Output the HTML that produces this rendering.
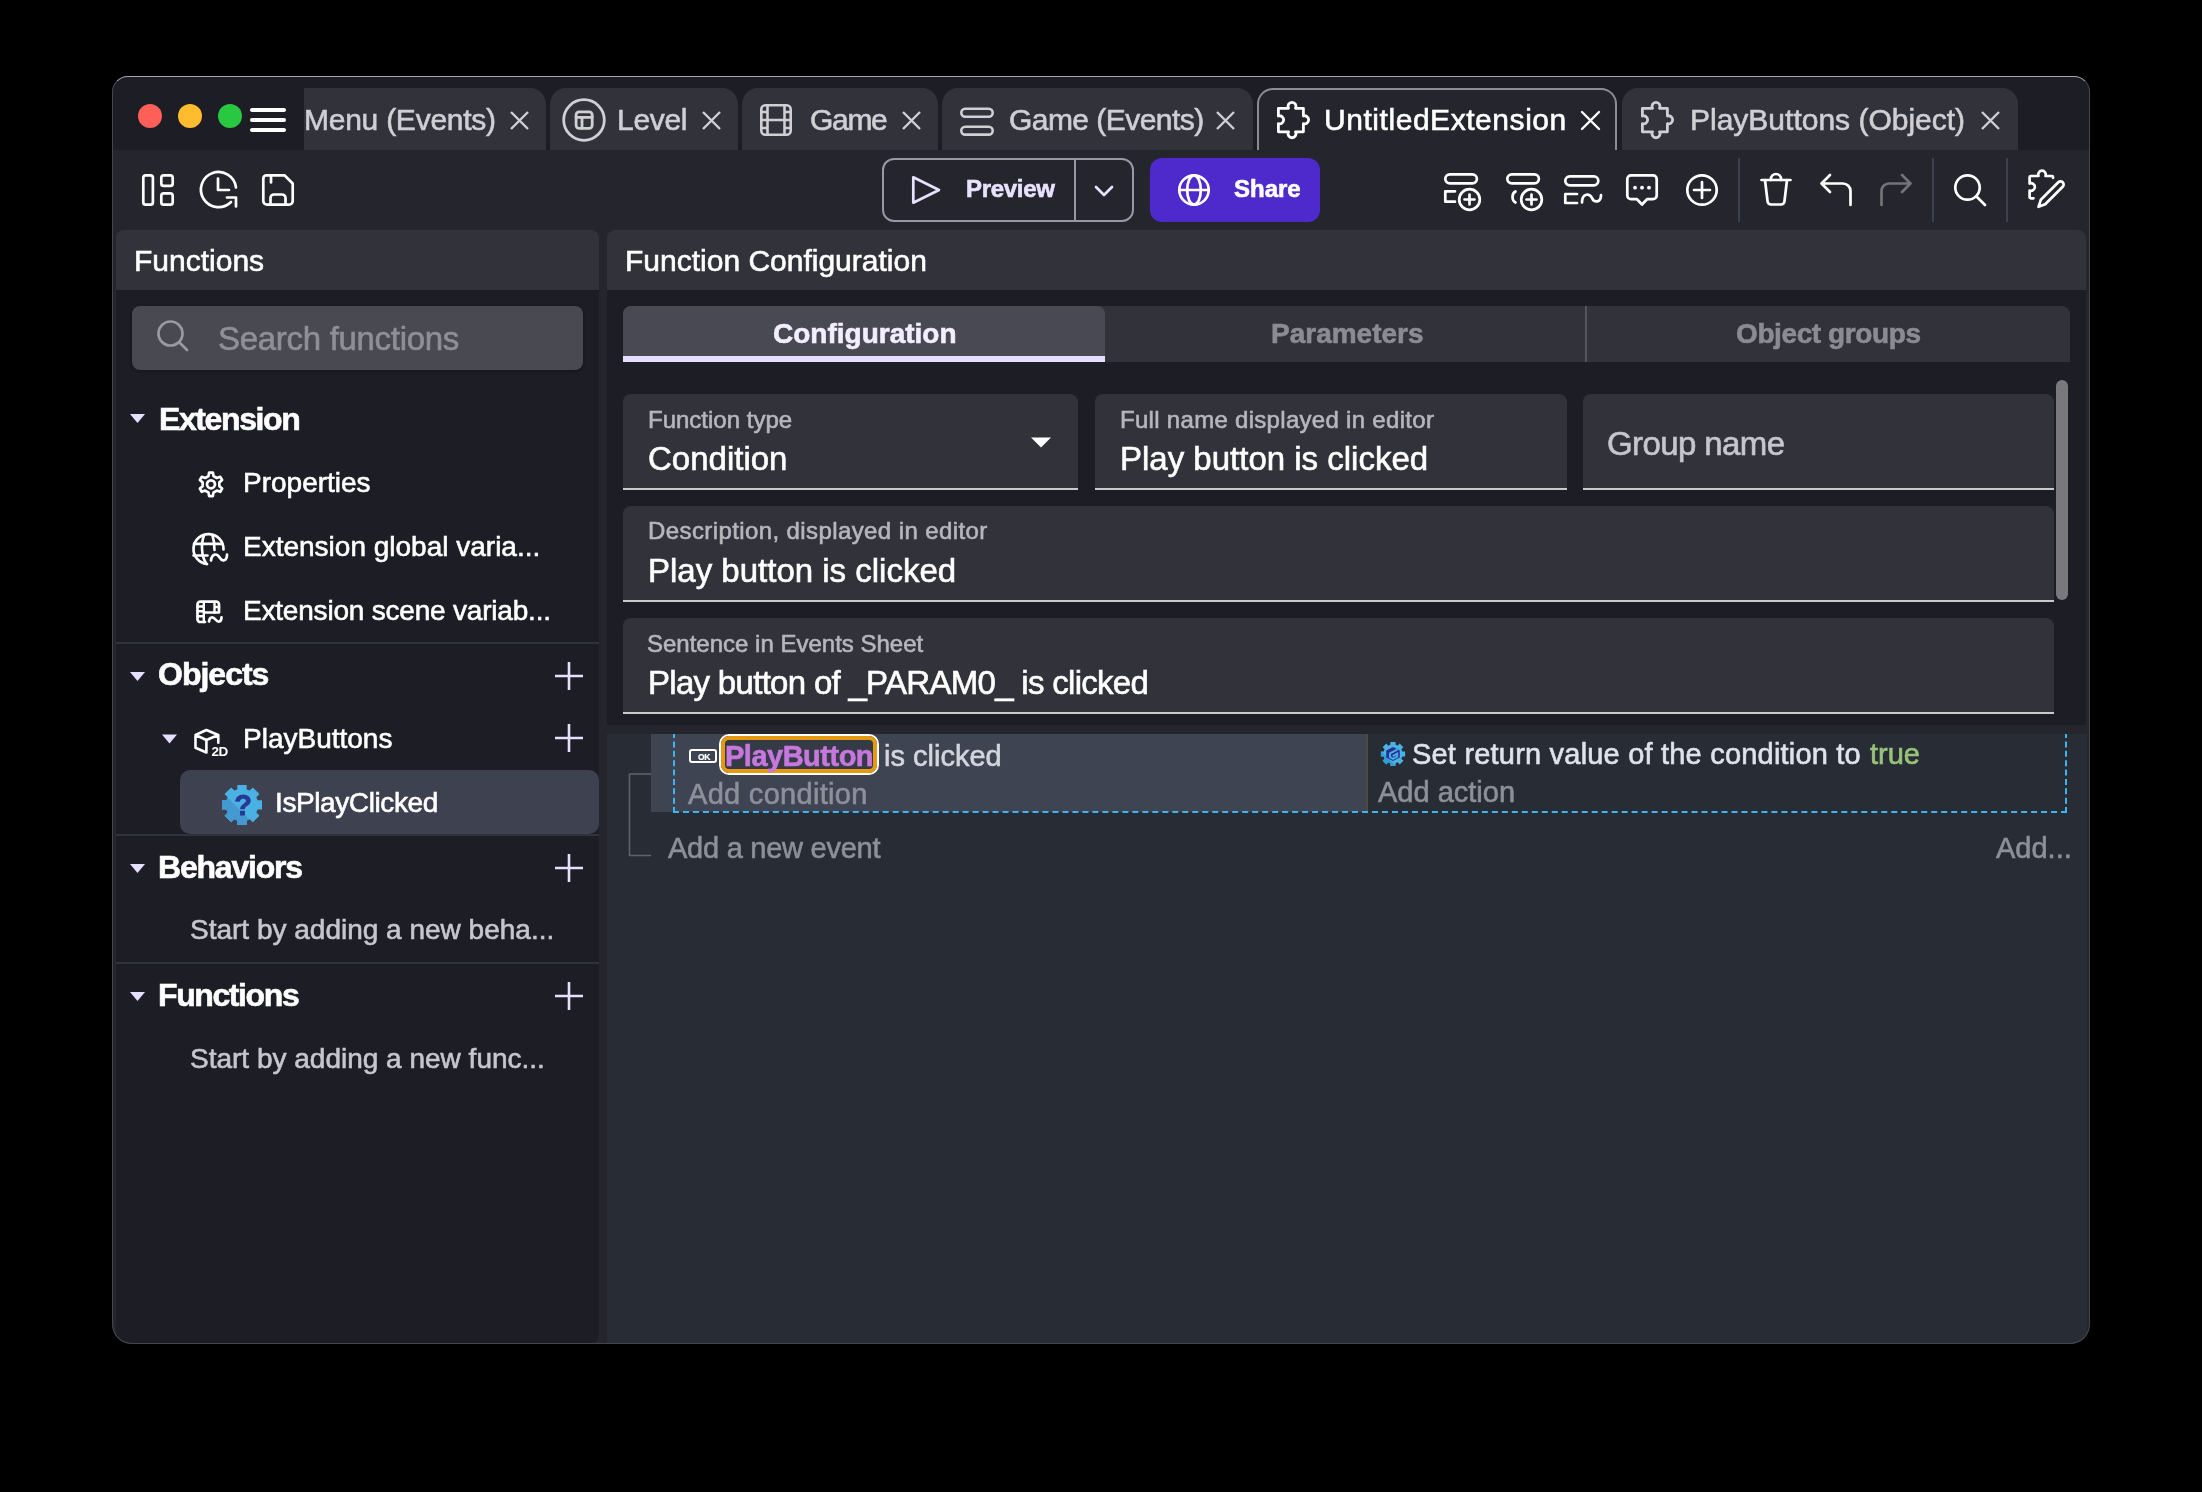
<!DOCTYPE html>
<html><head><meta charset="utf-8">
<style>
html,body{margin:0;padding:0;background:#000;width:2202px;height:1492px;overflow:hidden}
*{box-sizing:border-box}
body{font-family:"Liberation Sans",sans-serif;position:relative}
.a{position:absolute}
.t{position:absolute;line-height:1;white-space:nowrap;font-family:"Liberation Sans",sans-serif;-webkit-text-stroke:0.6px currentColor;will-change:transform}
svg{position:absolute;overflow:visible}
#win{left:112px;top:76px;width:1978px;height:1268px;border-radius:18px;background:#1d1d26;overflow:hidden}
#winborder{left:112px;top:76px;width:1978px;height:1268px;border-radius:16px 16px 20px 20px;border:1px solid #45454e;border-top-color:#a4a4aa;pointer-events:none}
.tab{position:absolute;top:88px;height:62px;background:#32323b;border-radius:16px 16px 0 0}
.tabtxt{color:#cfcfd4;font-size:30px}
.x{position:absolute}
.icon{fill:none;stroke:#fff;stroke-width:2;stroke-linecap:round;stroke-linejoin:round}
.hd{font-size:32px;font-weight:700;color:#fff}
.it{font-size:28px;color:#fff}
.sep{left:116px;width:483px;height:2px;background:#2f333e}
.tb{font-size:28px;font-weight:700;color:#8b8b91}
.fld{top:0;height:96px;background:#32323b;border-radius:8px 8px 0 0;border-bottom:2px solid #c9c9ce}
.lb{font-size:24px;color:#b6b6bc}
.vl{font-size:33px;color:#fff}
.ev{font-size:29px}
</style></head><body>
<div id="clip" style="position:absolute;left:0;top:0;width:2202px;height:1492px;clip-path:inset(76px 112px 148px 112px round 16px 16px 20px 20px)">
<div class="a" style="left:112px;top:76px;width:1978px;height:1268px;background:#1d1d26"></div>

<!-- titlebar content -->
<div class="a" style="left:138px;top:104px;width:24px;height:24px;border-radius:50%;background:#fe5f57"></div>
<div class="a" style="left:178px;top:104px;width:24px;height:24px;border-radius:50%;background:#febc2e"></div>
<div class="a" style="left:218px;top:104px;width:24px;height:24px;border-radius:50%;background:#28c840"></div>
<div class="a" style="left:250px;top:108px;width:36px;height:4px;border-radius:2px;background:#fff"></div>
<div class="a" style="left:250px;top:118px;width:36px;height:4px;border-radius:2px;background:#fff"></div>
<div class="a" style="left:250px;top:128px;width:36px;height:4px;border-radius:2px;background:#fff"></div>

<!-- tabs -->
<div class="tab" style="left:304px;width:242px;border-top-left-radius:0"></div>
<div class="t tabtxt" style="left:304px;top:105.3px;letter-spacing:-0.25px">Menu (Events)</div>

<div class="tab" style="left:550px;width:188px"></div>
<div class="t tabtxt" style="left:617px;top:105.3px;letter-spacing:-0.3px">Level</div>

<div class="tab" style="left:742px;width:196px"></div>
<div class="t tabtxt" style="left:810px;top:105.3px;letter-spacing:-1.3px">Game</div>

<div class="tab" style="left:942px;width:311px"></div>
<div class="t tabtxt" style="left:1009px;top:105.3px;letter-spacing:-0.55px">Game (Events)</div>

<div class="a" style="left:1257px;top:88px;width:360px;height:64px;background:#25252e;border:2px solid #8c8c92;border-bottom:none;border-radius:16px 16px 0 0"></div>
<div class="t tabtxt" style="left:1324px;top:105.3px;color:#fff;letter-spacing:0.55px">UntitledExtension</div>

<div class="tab" style="left:1622px;width:396px"></div>
<div class="t tabtxt" style="left:1690px;top:105.3px">PlayButtons (Object)</div>

<!-- toolbar -->
<div class="a" style="left:113px;top:150px;width:1976px;height:1193px;background:#25252e"></div>
<div class="a" style="left:882px;top:158px;width:252px;height:64px;border:2px solid #9b96a6;border-radius:12px"></div>
<div class="a" style="left:1074px;top:158px;width:2px;height:64px;background:#9b96a6"></div>
<div class="t" style="left:966px;top:177px;font-size:24px;font-weight:700;color:#e9e2ff;letter-spacing:-0.3px">Preview</div>
<div class="a" style="left:1150px;top:158px;width:170px;height:64px;background:#4e29cc;border-radius:12px"></div>
<div class="t" style="left:1234px;top:177px;font-size:24px;font-weight:700;color:#fff">Share</div>
<div class="a" style="left:1738px;top:158px;width:2px;height:64px;background:#3b414e"></div>
<div class="a" style="left:1932px;top:158px;width:2px;height:64px;background:#3b414e"></div>
<div class="a" style="left:2006px;top:158px;width:2px;height:64px;background:#3b414e"></div>

<!-- left panel -->
<div class="a" style="left:116px;top:230px;width:483px;height:60px;background:#32323b;border-radius:8px 8px 0 0"></div>
<div class="a" style="left:116px;top:290px;width:483px;height:1053px;background:#1d1d26;border-radius:0 0 8px 8px"></div>
<div class="t" style="left:134px;top:246px;font-size:30px;color:#fff">Functions</div>
<div class="a" style="left:132px;top:306px;width:451px;height:64px;background:#494952;border-radius:8px;box-shadow:0 1px 3px rgba(0,0,0,.35)"></div>
<div class="t" style="left:218px;top:321.5px;font-size:33px;color:#8f8f95;letter-spacing:-0.3px">Search functions</div>

<div class="t hd" style="left:159px;top:402.5px;letter-spacing:-1.4px">Extension</div>
<div class="t it" style="left:243px;top:469px">Properties</div>
<div class="t it" style="left:243px;top:532.5px">Extension global varia...</div>
<div class="t it" style="left:243px;top:596.5px;letter-spacing:-0.2px">Extension scene variab...</div>
<div class="a sep" style="top:642px"></div>
<div class="t hd" style="left:158px;top:658px;letter-spacing:-1px">Objects</div>
<div class="t it" style="left:243px;top:725px">PlayButtons</div>
<div class="a" style="left:180px;top:770px;width:419px;height:64px;background:#3d4150;border-radius:10px"></div>
<div class="t it" style="left:275px;top:789px;letter-spacing:-0.4px">IsPlayClicked</div>
<div class="a sep" style="top:834px"></div>
<div class="t hd" style="left:158px;top:851px;letter-spacing:-1.2px">Behaviors</div>
<div class="t it" style="left:190px;top:916px;color:#c6c6cc">Start by adding a new beha...</div>
<div class="a sep" style="top:962px"></div>
<div class="t hd" style="left:158px;top:979px;letter-spacing:-1.4px">Functions</div>
<div class="t it" style="left:190px;top:1044.5px;color:#c6c6cc">Start by adding a new func...</div>

<!-- main panel -->
<div class="a" style="left:607px;top:230px;width:1479px;height:60px;background:#32323b;border-radius:8px 8px 0 0"></div>
<div class="a" style="left:607px;top:290px;width:1479px;height:435px;background:#1d1d26"></div>
<div class="a" style="left:607px;top:734px;width:1480px;height:609px;background:#282c34"></div>
<div class="t" style="left:625px;top:246px;font-size:30px;color:#fff">Function Configuration</div>

<div class="a" style="left:623px;top:306px;width:1447px;height:56px;background:#32323b;border-radius:8px 8px 0 0"></div>
<div class="a" style="left:623px;top:306px;width:482px;height:56px;background:#494953;border-radius:8px 8px 0 0"></div>
<div class="a" style="left:623px;top:356px;width:482px;height:6px;background:#e6dfff"></div>
<div class="a" style="left:1585px;top:306px;width:2px;height:56px;background:#55555d"></div>
<div class="t tb" style="left:773px;top:320px;color:#f2eeff">Configuration</div>
<div class="t tb" style="left:1271px;top:320px">Parameters</div>
<div class="t tb" style="left:1736px;top:320px;letter-spacing:-0.4px">Object groups</div>

<div class="a fld" style="left:623px;top:394px;width:455px"></div>
<div class="t lb" style="left:648px;top:408px">Function type</div>
<div class="t vl" style="left:648px;top:442px">Condition</div>
<div class="a fld" style="left:1095px;top:394px;width:472px"></div>
<div class="t lb" style="left:1120px;top:408px;letter-spacing:0.3px">Full name displayed in editor</div>
<div class="t vl" style="left:1120px;top:442px">Play button is clicked</div>
<div class="a fld" style="left:1583px;top:394px;width:471px"></div>
<div class="t vl" style="left:1607px;top:427px;color:#c6c6cc;letter-spacing:-0.6px">Group name</div>
<div class="a fld" style="left:623px;top:506px;width:1431px"></div>
<div class="t lb" style="left:648px;top:519px;letter-spacing:0.4px">Description, displayed in editor</div>
<div class="t vl" style="left:648px;top:554px">Play button is clicked</div>
<div class="a fld" style="left:623px;top:618px;width:1431px"></div>
<div class="t lb" style="left:647px;top:632px">Sentence in Events Sheet</div>
<div class="t vl" style="left:648px;top:666px;letter-spacing:-0.7px">Play button of _PARAM0_ is clicked</div>
<div class="a" style="left:2056px;top:380px;width:12px;height:220px;background:#78787d;border-radius:6px"></div>

<!-- events sheet -->
<div class="a" style="left:651px;top:734px;width:715px;height:78px;background:#3e4452"></div>
<div class="a" style="left:1366px;top:734px;width:2px;height:78px;background:#4d4a42"></div>
<div class="a" style="left:719px;top:734px;width:160px;height:41px;border:2px solid #fff;border-radius:10px"></div>
<div class="a" style="left:721px;top:736px;width:156px;height:37px;border:4px solid #e39a10;border-radius:8px;background:#353a47"></div>
<div class="t ev" style="left:725px;top:742px;font-weight:700;color:#c678dd;letter-spacing:-0.5px">PlayButton</div>
<div class="t ev" style="left:884px;top:742px;color:#d3d6dd">is clicked</div>
<div class="t ev" style="left:688px;top:779.5px;color:#8c909a;letter-spacing:0.3px">Add condition</div>
<div class="t ev" style="left:1412px;top:740px;color:#dee3ec;letter-spacing:0.2px">Set return value of the condition to</div>
<div class="t ev" style="left:1870px;top:740px;color:#98c379">true</div>
<div class="t ev" style="left:1378px;top:777.5px;color:#8c909a">Add action</div>
<div class="t ev" style="left:668px;top:834px;letter-spacing:-0.25px;color:#8c909a">Add a new event</div>
<div class="t ev" style="left:1996px;top:834px;color:#8c909a">Add...</div>
<div class="a" style="left:689px;top:749px;width:28px;height:14px;border:2px solid #fff;border-radius:3px"></div>
<div class="t" style="left:697.5px;top:752.5px;font-size:8.5px;font-weight:700;color:#fff;letter-spacing:-0.3px;-webkit-text-stroke:0.2px #fff">OK</div>
<svg class="a" style="left:0;top:0" width="2202" height="1492" viewBox="0 0 2202 1492">
<g fill="none" stroke-linecap="round" stroke-linejoin="round">
<!-- tab icons -->
<g stroke="#cfcfd4" stroke-width="2.6">
 <circle cx="584" cy="120" r="20.3" stroke-width="2.8"/>
 <rect x="576.1" y="111.8" width="16.1" height="16.5" rx="3" stroke-width="2.8"/>
 <path d="M576.1 117.3H592.2M582 117.3V128.3" stroke-width="2.8"/>
 <rect x="761.3" y="105.3" width="29.4" height="29.4" rx="4"/>
 <path d="M767.5 105.3V134.7M784.5 105.3V134.7M767.5 120H784.5M761.3 112H767.5M761.3 120H767.5M761.3 128H767.5M784.5 112H790.7M784.5 120H790.7M784.5 128H790.7"/>
 <rect x="961.3" y="108.8" width="31.4" height="7.9" rx="3.9"/>
 <rect x="961.3" y="126.7" width="31.4" height="7.9" rx="3.9"/>
</g>
<!-- close x -->
<g stroke="#cfcfd4" stroke-width="2.4" stroke-linecap="butt">
 <path d="M511 112L528 129M528 112L511 129"/>
 <path d="M703 112L720 129M720 112L703 129"/>
 <path d="M903 112L920 129M920 112L903 129"/>
 <path d="M1217 112L1234 129M1234 112L1217 129"/>
 <path d="M1982 112L1999 129M1999 112L1982 129"/>
</g>
<path stroke="#fff" stroke-width="2.4" d="M1582 112L1599 129M1599 112L1582 129"/>
<!-- puzzle tab icons -->
<path stroke="#fff" stroke-width="2.8" d="M1278.4 108.3H1288.5A4 4 0 1 1 1295.5 108.3H1303.4V116A4 4 0 1 1 1303.4 123.6V131.8H1295.5A4 4 0 1 1 1288.5 131.8H1278.4V123.6A4 4 0 1 0 1278.4 116Z"/>
<path stroke="#cfcfd4" stroke-width="2.8" transform="translate(364,0)" d="M1278.4 108.3H1288.5A4 4 0 1 1 1295.5 108.3H1303.4V116A4 4 0 1 1 1303.4 123.6V131.8H1295.5A4 4 0 1 1 1288.5 131.8H1278.4V123.6A4 4 0 1 0 1278.4 116Z"/>

<!-- toolbar left icons -->
<g stroke="#fff" stroke-width="2.7">
 <rect x="143.3" y="175.3" width="9.6" height="29.4" rx="2.5"/>
 <rect x="161.3" y="175.3" width="11.4" height="10.6" rx="2.5"/>
 <rect x="161.3" y="193.3" width="11.4" height="11.4" rx="2.5"/>
 <path d="M236 187.5A17.6 17.6 0 1 0 231 202"/>
 <path d="M227 197.5H236V206.5"/>
 <path d="M218 178.5V190H229"/>
 <path d="M266 175.3H284.5L292.7 183.5V201A3.7 3.7 0 0 1 289 204.7H267A3.7 3.7 0 0 1 263.3 201V179A3.7 3.7 0 0 1 266 175.3Z"/>
 <path d="M271 176V182.5"/>
 <path d="M270.5 204.5V198A3.5 3.5 0 0 1 274 194.5H282A3.5 3.5 0 0 1 285.5 198V204.5"/>
</g>
<!-- preview / share icons -->
<g stroke="#e9e2ff" stroke-width="2.7">
 <path d="M913.3 177.3L939 190L913.3 202.7Z"/>
 <path d="M1096 187L1104 195L1112 187"/>
</g>
<g stroke="#fff" stroke-width="2.7">
 <circle cx="1194" cy="190" r="14.7"/>
 <ellipse cx="1194" cy="190" rx="6.8" ry="14.7"/>
 <path d="M1180 190H1208"/>
</g>
<!-- toolbar right icons -->
<g stroke="#fff" stroke-width="2.7">
 <rect x="1445.3" y="174.3" width="31.6" height="9" rx="4.5"/>
 <path d="M1455 191.3H1445.3V201.7H1455"/>
 <circle cx="1469.5" cy="199.5" r="10.3"/>
 <path d="M1469.5 194.5V204.5M1464.5 199.5H1474.5"/>
 <rect x="1507.3" y="174.3" width="31.6" height="9" rx="4.5"/>
 <path d="M1515.5 191.5C1511.5 193.5 1511.5 200.5 1515.5 202.5"/>
 <circle cx="1531.5" cy="199.5" r="10.3"/>
 <path d="M1531.5 194.5V204.5M1526.5 199.5H1536.5"/>
 <rect x="1565.3" y="176.3" width="33" height="9" rx="4.5"/>
 <path d="M1577 194H1565.3V203H1577"/>
 <path d="M1582 202.5C1582 193 1590 193 1592 198C1594 203 1601 203 1601 195"/>
 <path d="M1631 175.3H1653A3.7 3.7 0 0 1 1656.7 179V195.5A3.7 3.7 0 0 1 1653 199.2H1647L1642 204.5L1637 199.2H1631A3.7 3.7 0 0 1 1627.3 195.5V179A3.7 3.7 0 0 1 1631 175.3Z"/>
 <circle cx="1702" cy="190" r="14.7"/>
 <path d="M1702 182V198M1694 190H1710"/>
 <path d="M1761.5 180H1790.5"/>
 <path d="M1771 180V179A5 5 0 0 1 1781 179V180"/>
 <path d="M1765 180L1767.5 201A3.5 3.5 0 0 0 1771 204.5H1781A3.5 3.5 0 0 0 1784.5 201L1787 180"/>
 <path d="M1830 175L1821.5 183.5L1830 192M1821.5 183.5H1843A7.5 7.5 0 0 1 1850.5 191V205"/>
 <circle cx="1967.5" cy="187.5" r="12.2"/>
 <path d="M1976.5 196.5L1985 205"/>
 <path d="M2033.5 198.3H2031A1.5 1.5 0 0 1 2029.6 196.8V190.5A3.8 3.8 0 1 0 2029.6 183.5V177.5A1.5 1.5 0 0 1 2031 176H2038.5A3.8 3.8 0 1 1 2045.5 176H2052A1 1 0 0 1 2053 177V177.8"/>
 <path d="M2038.5 206.8L2040.8 199.8L2058.3 182.3A3.1 3.1 0 0 1 2062.7 186.7L2045.2 204.2Z"/>
 <circle cx="1635" cy="187.7" r="1.9" fill="#fff" stroke="none"/><circle cx="1642" cy="187.7" r="1.9" fill="#fff" stroke="none"/><circle cx="1649" cy="187.7" r="1.9" fill="#fff" stroke="none"/>
</g>
<path stroke="#737378" stroke-width="2.7" d="M1902 175L1910.5 183.5L1902 192M1910.5 183.5H1889A7.5 7.5 0 0 0 1881.5 191V205"/>

<!-- left panel icons -->
<circle cx="170.5" cy="333.5" r="12" stroke="#9a9aa0" stroke-width="2.7"/>
<path d="M179.5 342.5L187 350" stroke="#9a9aa0" stroke-width="2.7"/>
<g fill="#e6dfff" stroke="none">
 <path d="M130 414H145L137.5 423Z"/>
 <path d="M130 672H145L137.5 681Z"/>
 <path d="M162 734.5H177L169.5 743.5Z"/>
 <path d="M130 864H145L137.5 873Z"/>
 <path d="M130 992H145L137.5 1001Z"/>
</g>
<g stroke="#e6dfff" stroke-width="2.6" stroke-linecap="butt">
 <path d="M569 662V690M555 676H583"/>
 <path d="M569 724V752M555 738H583"/>
 <path d="M569 854V882M555 868H583"/>
 <path d="M569 982V1010M555 996H583"/>
</g>
<g stroke="#fff" stroke-width="2.4">
 <path stroke-width="2.7" d="M208.49 476.08 L209.14 472.55 L212.86 472.55 L213.51 476.08 L216.87 478.01 L220.25 476.81 L222.11 480.04 L219.38 482.37 L219.38 486.23 L222.11 488.56 L220.25 491.79 L216.87 490.59 L213.51 492.52 L212.86 496.05 L209.14 496.05 L208.49 492.52 L205.13 490.59 L201.75 491.79 L199.89 488.56 L202.62 486.23 L202.62 482.37 L199.89 480.04 L201.75 476.81 L205.13 478.01Z"/>
 <circle cx="211" cy="484.3" r="4" stroke-width="2.8"/>
 <path stroke-width="2.7" d="M223.5 549.5A15 15 0 1 0 207 564"/>
 <path stroke-width="2.6" d="M194 543.9H222M193.5 555.5H207.5"/>
 <path stroke-width="2.6" d="M204 535.5C201 543 201 556 206.5 564M212.5 535.5C214 540 214.5 545 214.5 550"/>
 <path stroke-width="2.7" d="M211 560.5C212 553 217 553 220 558C222 561.5 227 561.5 227 554.5"/>
 <path stroke-width="2.7" d="M205 622H200.3A2.8 2.8 0 0 1 197.5 619.2V604.5A2.8 2.8 0 0 1 200.3 601.7H216.2A2.8 2.8 0 0 1 219 604.5V612.5H204"/>
 <path stroke-width="2.4" d="M203.8 602V622M214.5 602V612.5M197.5 606.5H203.8M197.5 611.3H203.8M197.5 616.2H203.8M214.5 607H219"/>
 <path stroke-width="2.7" d="M209 621.5C209.5 616.5 213 616.5 215.5 619.5C218 622.5 221.5 622.5 221.5 617.3"/>
</g>
<g stroke="#fff" stroke-width="2.6" fill="none">
 <path d="M206.4 730L218.3 735V742.8M206.4 730L195.5 735V747.8L206.4 752.5V740L218.3 735M195.5 735L206.4 740"/>
</g>
<text x="211.5" y="756" font-family="Liberation Sans" font-size="13.5" font-weight="700" fill="#fff" stroke="none" letter-spacing="-0.5">2D</text>
<!-- Q gear -->
<defs><clipPath id="qc"><path d="M200 770L290 860H200Z"/></clipPath><clipPath id="gc"><path d="M1360 730L1420 790H1360Z"/></clipPath></defs>
<g stroke="none">
 <path fill="#4bb0e3" d="M237.30 789.40L237.30 784.90L246.70 784.90L246.70 789.40A16.2 16.2 0 0 1 249.64 790.61L252.82 787.43L259.47 794.08L256.29 797.26A16.2 16.2 0 0 1 257.50 800.20L262.00 800.20L262.00 809.60L257.50 809.60A16.2 16.2 0 0 1 256.29 812.54L259.47 815.72L252.82 822.37L249.64 819.19A16.2 16.2 0 0 1 246.70 820.40L246.70 824.90L237.30 824.90L237.30 820.40A16.2 16.2 0 0 1 234.36 819.19L231.18 822.37L224.53 815.72L227.71 812.54A16.2 16.2 0 0 1 226.50 809.60L222.00 809.60L222.00 800.20L226.50 800.20A16.2 16.2 0 0 1 227.71 797.26L224.53 794.08L231.18 787.43L234.36 790.61A16.2 16.2 0 0 1 237.30 789.40Z"/>
 <path fill="#4599d1" clip-path="url(#qc)" d="M237.30 789.40L237.30 784.90L246.70 784.90L246.70 789.40A16.2 16.2 0 0 1 249.64 790.61L252.82 787.43L259.47 794.08L256.29 797.26A16.2 16.2 0 0 1 257.50 800.20L262.00 800.20L262.00 809.60L257.50 809.60A16.2 16.2 0 0 1 256.29 812.54L259.47 815.72L252.82 822.37L249.64 819.19A16.2 16.2 0 0 1 246.70 820.40L246.70 824.90L237.30 824.90L237.30 820.40A16.2 16.2 0 0 1 234.36 819.19L231.18 822.37L224.53 815.72L227.71 812.54A16.2 16.2 0 0 1 226.50 809.60L222.00 809.60L222.00 800.20L226.50 800.20A16.2 16.2 0 0 1 227.71 797.26L224.53 794.08L231.18 787.43L234.36 790.61A16.2 16.2 0 0 1 237.30 789.40Z"/>
 <text x="243" y="815.3" text-anchor="middle" font-family="Liberation Sans" font-size="29" font-weight="700" fill="#263890" stroke="#263890" stroke-width="0.8">?</text>
</g>
<path fill="#fff" stroke="none" d="M1031 437.5H1051L1041 447.5Z"/>
<!-- events sheet -->
<g stroke="#5c6370" stroke-width="1.6" stroke-linecap="butt">
 <path d="M651 774H629.5V855.5H651"/>
</g>
<g stroke="#3cb5f2" stroke-width="2" stroke-linecap="butt" stroke-dasharray="6 4">
 <path stroke-dasharray="6 3.37" d="M674 813V734"/>
 <path stroke-dasharray="6 3.37" d="M2066 813V734"/>
 <path stroke-dasharray="6 3.986" d="M673 812H2067"/>
</g>
<!-- G icon -->
<g stroke="none">
 <path fill="#4ab3e6" d="M1390.40 744.76L1390.40 741.90L1395.60 741.90L1395.60 744.76A9.6 9.6 0 0 1 1397.70 745.63L1399.72 743.61L1403.39 747.28L1401.37 749.30A9.6 9.6 0 0 1 1402.24 751.40L1405.10 751.40L1405.10 756.60L1402.24 756.60A9.6 9.6 0 0 1 1401.37 758.70L1403.39 760.72L1399.72 764.39L1397.70 762.37A9.6 9.6 0 0 1 1395.60 763.24L1395.60 766.10L1390.40 766.10L1390.40 763.24A9.6 9.6 0 0 1 1388.30 762.37L1386.28 764.39L1382.61 760.72L1384.63 758.70A9.6 9.6 0 0 1 1383.76 756.60L1380.90 756.60L1380.90 751.40L1383.76 751.40A9.6 9.6 0 0 1 1384.63 749.30L1382.61 747.28L1386.28 743.61L1388.30 745.63A9.6 9.6 0 0 1 1390.40 744.76Z"/>
 <path fill="#2f9fd6" clip-path="url(#gc)" d="M1390.40 744.76L1390.40 741.90L1395.60 741.90L1395.60 744.76A9.6 9.6 0 0 1 1397.70 745.63L1399.72 743.61L1403.39 747.28L1401.37 749.30A9.6 9.6 0 0 1 1402.24 751.40L1405.10 751.40L1405.10 756.60L1402.24 756.60A9.6 9.6 0 0 1 1401.37 758.70L1403.39 760.72L1399.72 764.39L1397.70 762.37A9.6 9.6 0 0 1 1395.60 763.24L1395.60 766.10L1390.40 766.10L1390.40 763.24A9.6 9.6 0 0 1 1388.30 762.37L1386.28 764.39L1382.61 760.72L1384.63 758.70A9.6 9.6 0 0 1 1383.76 756.60L1380.90 756.60L1380.90 751.40L1383.76 751.40A9.6 9.6 0 0 1 1384.63 749.30L1382.61 747.28L1386.28 743.61L1388.30 745.63A9.6 9.6 0 0 1 1390.40 744.76Z"/>
 <path fill="#2c2f92" d="M1393 747L1399.8 750.5V757.5L1393 761L1386.2 757.5V750.5Z"/>
 <path fill="none" stroke="#45ace0" stroke-width="2" stroke-linejoin="miter" d="M1396.8 749.8L1390 753.3V757.2L1393 758.8L1397.2 756.6V753.7L1393.5 755.6"/>
</g>
</g>
</svg>
</div>
<div id="winborder" class="a"></div>
</body></html>
